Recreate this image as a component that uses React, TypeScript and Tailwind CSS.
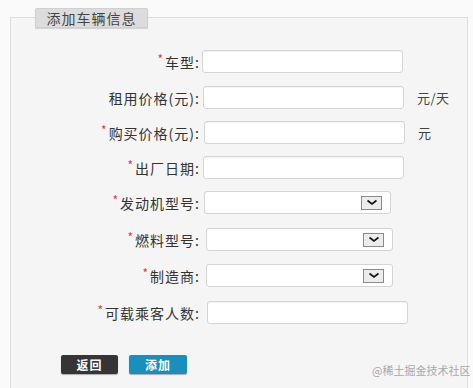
import React from "react";

type Row = {
  label: string;
  req: boolean;
  kind: "input" | "select";
  suffix?: string;
  mt: string;
  ml: string;
};

const rows: Row[] = [
  { label: "车型", req: true, kind: "input", mt: "mt-[22px]", ml: "ml-[2px]" },
  { label: "租用价格(元)", req: false, kind: "input", suffix: "元/天", mt: "mt-[13px]", ml: "ml-[3px]" },
  { label: "购买价格(元)", req: true, kind: "input", suffix: "元", mt: "mt-[12px]", ml: "ml-[4px]" },
  { label: "出厂日期", req: true, kind: "input", mt: "mt-[12px]", ml: "ml-[3px]" },
  { label: "发动机型号", req: true, kind: "select", mt: "mt-[12px]", ml: "ml-[4px]" },
  { label: "燃料型号", req: true, kind: "select", mt: "mt-[14px]", ml: "ml-[6px]" },
  { label: "制造商", req: true, kind: "select", mt: "mt-[13px]", ml: "ml-[6px]" },
  { label: "可载乘客人数", req: true, kind: "input", mt: "mt-[14px]", ml: "ml-[7px]" },
];

const font = { fontFamily: '"Noto Sans CJK SC", "Liberation Sans", sans-serif' };

function Chevron() {
  return (
    <svg width="12" height="7" viewBox="0 0 12 7">
      <path d="M1.5 1.5 L6 5 L10.5 1.5" fill="none" stroke="#111" strokeWidth="1.6" />
    </svg>
  );
}

export default function App() {
  return (
    <div className="w-[473px] h-[388px] bg-[#fafafa] overflow-hidden relative text-[#333]" style={font}>
      <div className="pt-[17px] pl-[10px] pr-[5px]">
        <div className="border-l border-t border-r border-[#dedede] bg-[#f5f5f5] h-[380px]">
          <div className="-mt-[10px] ml-[24px] w-[113px] h-[20px] bg-[#dcdcdc] border border-[#d0d0d0] rounded-t-[2px] shadow-[0_1px_1px_rgba(0,0,0,0.15)] flex items-center justify-center text-[14px] tracking-[1px] text-[#444]">
            添加车辆信息
          </div>
          {rows.map((r) => (
            <div key={r.label} className={`flex items-center h-[23px] ${r.mt}`}>
              <div className="w-[189px] flex justify-end items-center text-[14px] tracking-[1px] leading-none">
                {r.req && <span className="text-[#e33] text-[12px] self-start -mt-[2px] mr-[1px]">*</span>}
                <span>{r.label}:</span>
              </div>
              {r.kind === "input" ? (
                <div className={`${r.ml} w-[201px] h-[23px] bg-white border border-[#d4d4d4] rounded-[3px] shadow-[inset_0_1px_1px_rgba(0,0,0,0.05)]`} />
              ) : (
                <div className={`${r.ml} w-[187px] h-[23px] bg-white border border-[#d4d4d4] rounded-[3px] flex items-center justify-end pr-[8px]`}>
                  <div className="w-[21px] h-[14px] bg-[#ececec] border border-[#8a8a8a] flex items-center justify-center">
                    <Chevron />
                  </div>
                </div>
              )}
              {r.suffix && (
                <span className="ml-[13px] text-[13px] tracking-[0.5px] text-[#444]">{r.suffix}</span>
              )}
            </div>
          ))}
          <div className="flex mt-[31px] ml-[50px] gap-[11px]">
            <button className="w-[57px] h-[19px] rounded-[2px] bg-[#353535] text-white text-[12px] font-bold tracking-[1px] flex items-center justify-center shadow-[0_1px_1px_rgba(0,0,0,0.3)]">
              返回
            </button>
            <button className="w-[58px] h-[19px] rounded-[2px] bg-[#1b8fbc] text-white text-[12px] font-bold tracking-[1px] flex items-center justify-center shadow-[0_1px_1px_rgba(0,0,0,0.3)]">
              添加
            </button>
          </div>
        </div>
      </div>
      <div className="absolute left-[372px] top-[362px] text-[11px] text-[#a8a8a8] tracking-[0px] whitespace-nowrap">
        @稀土掘金技术社区
      </div>
    </div>
  );
}
